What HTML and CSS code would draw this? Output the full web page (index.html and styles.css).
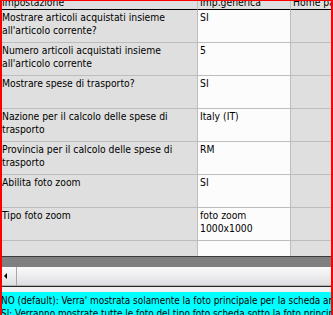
FILE: index.html
```html
<!DOCTYPE html>
<html lang="it">
<head>
  <meta charset="UTF-8" />
  <title>Impostazioni scheda articolo</title>
  <link rel="stylesheet" href="styles.css">
</head>
<body>
  <div class="window">
    <div class="grid">
      <div class="row head">
        <div class="cell"><span>Impostazione</span></div>
        <div class="cell"><span>Imp.generica</span></div>
        <div class="cell"><span>Home page</span></div>
      </div>
      <div class="row">
        <div class="cell">Mostrare articoli acquistati insieme all'articolo corrente?</div>
        <div class="cell value">SI</div>
        <div class="cell"></div>
      </div>
      <div class="row">
        <div class="cell">Numero articoli acquistati insieme all'articolo corrente</div>
        <div class="cell value">5</div>
        <div class="cell"></div>
      </div>
      <div class="row">
        <div class="cell">Mostrare spese di trasporto?</div>
        <div class="cell value">SI</div>
        <div class="cell"></div>
      </div>
      <div class="row">
        <div class="cell">Nazione per il calcolo delle spese di trasporto</div>
        <div class="cell value">Italy (IT)</div>
        <div class="cell"></div>
      </div>
      <div class="row">
        <div class="cell">Provincia per il calcolo delle spese di trasporto</div>
        <div class="cell value">RM</div>
        <div class="cell"></div>
      </div>
      <div class="row">
        <div class="cell">Abilita foto zoom</div>
        <div class="cell value">SI</div>
        <div class="cell"></div>
      </div>
      <div class="row">
        <div class="cell">Tipo foto zoom</div>
        <div class="cell value">foto zoom 1000x1000</div>
        <div class="cell"></div>
      </div>
      <div class="row partial">
        <div class="cell"></div>
        <div class="cell value"></div>
        <div class="cell"></div>
      </div>
    </div>
    <div class="grid-empty"></div>
    <div class="hscroll">
      <div class="hscroll-btn"><span class="arrow-left"></span></div>
      <div class="hscroll-thumb"></div>
    </div>
    <div class="gap"></div>
    <div class="help">
      <div>NO (default): Verra' mostrata solamente la foto principale per la scheda articolo</div>
      <div>SI: Verranno mostrate tutte le foto del tipo foto scheda sotto la foto principale</div>
    </div>
    <div class="frame"></div>
  </div>
</body>
</html>
```

FILE: styles.css
```css
:root {
  --face: #dfdfdf;
  --line: #bdbdbd;
  --white: #fcfcfc;
  --cyan: #00ffff;
}

* {
  margin: 0;
  padding: 0;
  box-sizing: border-box;
}

body {
  font-family: 'DejaVu Sans Condensed', 'Liberation Sans', sans-serif;
  font-size: 10.3px;
  line-height: 13px;
  color: #000;
  background: #f0f0f0;
  overflow: hidden;
}

.window {
  position: relative;
  width: 333px;
  height: 315px;
  overflow: hidden;
  display: flex;
  flex-direction: column;
}

.grid {
  width: 333px;
  overflow: hidden;
}

.row {
  display: grid;
  grid-template-columns: 198px 93px 92px;
  width: 383px;
  height: 33px;
}

.cell {
  background: var(--face);
  border-right: 1px solid var(--line);
  border-bottom: 1px solid var(--line);
  padding: 1px 2px 0;
  overflow: hidden;
}

.cell.value {
  background: var(--white);
}

.head {
  height: 10px;
}

.head .cell {
  border-bottom: 1px solid #000;
  padding-top: 0;
  white-space: nowrap;
}

.head .cell span {
  display: block;
  margin-top: -4px;
}

.partial {
  height: 15px;
}

.partial .cell {
  border-bottom: none;
}

.grid-empty {
  height: 11px;
  background: #808080;
  border-top: 1px solid #3c3c3c;
}

.hscroll {
  display: flex;
  height: 20px;
  background: linear-gradient(#fbfbfb, #e9e9ec 60%, #dedee2);
  border-bottom: 1px solid #2a2a2a;
  box-shadow: inset 0 -1px 0 #b0b0b0;
}

.hscroll-btn {
  width: 17px;
  display: flex;
  align-items: center;
  padding-left: 4px;
  border-right: 1px solid #a8a8a8;
  padding-bottom: 1px;
}

.arrow-left {
  width: 0;
  height: 0;
  border-top: 3px solid transparent;
  border-bottom: 3px solid transparent;
  border-right: 3px solid #000;
}

.hscroll-thumb {
  flex: 1;
}

.gap {
  height: 5px;
  background: #f0f0f0;
}

.help {
  flex: 1;
  background: var(--cyan);
  padding: 2px 0 0 1px;
  font-size: 9.9px;
  white-space: nowrap;
  overflow: hidden;
}

.frame {
  position: absolute;
  top: 0;
  left: 0;
  width: 333px;
  height: 330px;
  border: 2px solid #f00;
  border-top-width: 1px;
  pointer-events: none;
}
```
